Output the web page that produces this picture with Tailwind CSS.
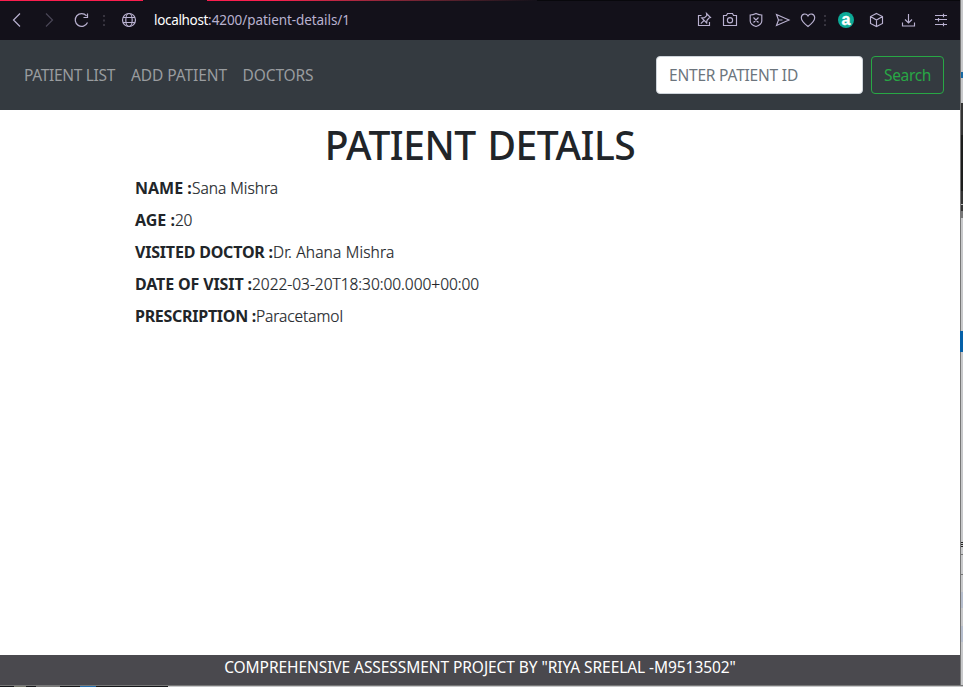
<!DOCTYPE html>
<html lang="en"><head><meta charset="utf-8"><title>Patient Details</title>
<script src="https://cdn.jsdelivr.net/npm/@tailwindcss/browser@4"></script></head>
<body class="flex h-[687px] w-[963px] flex-col overflow-hidden bg-[#c7c8ca] font-['Noto_Sans',sans-serif] text-[15.5px] leading-6 text-[#212529]">
<div class="flex h-[685px]">
  <div class="flex w-[960px] flex-col bg-white">
    <!-- Browser toolbar -->
    <div class="flex h-10 flex-col bg-[#13111a]">
      <div class="flex h-px shrink-0">
        <div class="w-[143px] bg-[#fa1e4e]"></div><div class="w-16 bg-[#13111a]"></div>
        <div class="w-[330px] bg-linear-to-r from-[#fa1e4e] from-20% to-[#13111a]"></div><div class="flex-1 bg-[#08080c]"></div>
      </div>
      <div class="flex h-[39px] items-center text-[13.5px]">
        <svg class="h-[39px] w-[154px] shrink-0" viewBox="0 1 154 39" fill="none" stroke="#b9b1d0" stroke-width="1.2">
          <path d="M20 13.5 13.5 20l6.500 6.500"/>
          <path stroke="#4a4656" d="m46 13.500 6.500 6.500-6.500 6.500"/>
          <path d="M87.500 22.500A6.400 6.400 0 1 1 86.500 15.800M87.500 13.500v4h-4"/>
          <path stroke="#37343f" stroke-width="2" stroke-dasharray="2 2.500" d="M104 15v11"/>
          <circle cx="129" cy="20" r="6.500"/><ellipse cx="129" cy="20" rx="3.200" ry="6.500"/><path d="M123 17.500h12M123 22.500h12"/>
        </svg>
        <div class="flex-1 whitespace-nowrap pb-0.5 text-[#b9b1d0]"><span class="tracking-[-0.33px] text-white">localhost</span><span class="tracking-[-0.07px]">:4200/patient-details/1</span></div>
        <svg class="h-[39px] w-[270px] shrink-0" viewBox="690 1 270 39" fill="none" stroke="#b9b1d0" stroke-width="1.15">
          <path d="M701.500 15.500h-3v10h11v-3.500M706.500 13.500l4 4-1.500.5-2 2.300-.3 2.700-5-5 2.800-.4 2.300-2zM704 20.500l-3.200 3.200"/>
          <path d="M723.500 15.500h3l1-2h5l1 2h3v10h-13z"/><circle cx="730" cy="20.200" r="2.600"/>
          <path d="M756 13.500c2 1 4 1.500 5.800 1.500v6c0 2.500-2.800 4.500-5.800 5.500-3-1-5.800-3-5.800-5.500v-6c1.800 0 3.800-.5 5.800-1.500zM753.500 17.500l5 5M758.500 17.500l-5 5"/>
          <path d="m776.500 14.500 12.500 5.500-12.500 5.500 2-5.500zM778.500 20h4"/>
          <path d="M808 26.500c-4-3-6.700-5.300-6.700-8.700 0-4.200 5-5 6.700-1.800 1.700-3.200 6.700-2.400 6.700 1.800 0 3.400-2.700 5.700-6.700 8.700z"/>
          <path stroke="#37343f" stroke-width="2" stroke-dasharray="2 2.500" d="M825 15v11"/>
          <circle cx="846" cy="20" r="8" fill="#0caa97" stroke="none"/>
          <text x="846" y="24.500" text-anchor="middle" fill="#fff" stroke="#fff" stroke-width="0.4" class="font-['Liberation_Sans',sans-serif] text-[16px] font-bold">a</text>
          <path d="m876.500 13.500 6 3v7l-6 3-6-3v-7zM870.500 16.500l6 3.500 6-3.500M876.500 20v6.500"/>
          <path d="M908.500 14v8.500M905 19.500l3.500 3.500 3.500-3.500M902.500 22.500v3.500h12v-3.500"/>
          <path d="M935 15.500h12M935 19.500h12M935 24.500h12M943.500 13.800v3.500M938.500 18v3.500M943.500 22.700v3.500"/>
        </svg>
      </div>
    </div>
    <!-- Site navigation -->
    <nav class="flex h-[70px] items-center whitespace-nowrap bg-[#343a40] pl-6 pr-4 text-[#999c9f]">
      <a class="w-[107px] tracking-[-0.32px]">PATIENT LIST</a><a class="w-[111.500px] tracking-[-0.08px]">ADD PATIENT</a><a class="tracking-[-0.11px]">DOCTORS</a>
      <div class="ml-auto flex h-[38px] w-[207px] items-center rounded border border-[#ced4da] bg-white px-3 tracking-[-0.2px] text-[#6c757d]">ENTER PATIENT ID</div>
      <div class="ml-2 flex h-[38px] w-[73px] items-center justify-center rounded border border-[#28a745] tracking-[-0.33px] text-[#28a745]">Search</div>
    </nav>
    <!-- Patient record -->
    <main class="flex-1 whitespace-nowrap pt-[11px]">
      <h1 class="text-center text-[39px] font-medium leading-[48px] tracking-[-0.45px] [word-spacing:2px]">PATIENT DETAILS</h1>
      <div class="flex flex-col gap-2 pl-[135px] pt-[7px]">
        <p class="flex"><b class="w-[57px] text-base">NAME :</b><span class="font-light [-webkit-text-stroke:0.2px]">Sana Mishra</span></p>
        <p class="flex"><b class="w-10 text-base">AGE :</b><span class="font-light tracking-[-0.3px] [-webkit-text-stroke:0.2px]">20</span></p>
        <p class="flex"><b class="w-[138px] text-base tracking-[-0.2px]">VISITED DOCTOR :</b><span class="font-light tracking-[0.17px] [-webkit-text-stroke:0.2px]">Dr. Ahana Mishra</span></p>
        <p class="flex"><b class="w-[117px] text-base tracking-[-0.13px]">DATE OF VISIT :</b><span class="font-light tracking-[-0.03px] [-webkit-text-stroke:0.2px]">2022-03-20T18:30:00.000+00:00</span></p>
        <p class="flex"><b class="w-[121px] text-base tracking-[-0.28px]">PRESCRIPTION :</b><span class="font-light tracking-[-0.06px] [-webkit-text-stroke:0.2px]">Paracetamol</span></p>
      </div>
    </main>
    <footer class="h-[30px] whitespace-nowrap bg-[#4a494e] text-center tracking-[-0.07px] text-white">COMPREHENSIVE ASSESSMENT PROJECT BY "RIYA SREELAL -M9513502"</footer>
  </div>
  <!-- Edge of the window behind -->
  <div class="flex w-[3px] flex-col border-l border-[#777] bg-[#c7c8ca]">
    <div class="h-[72px]"></div><div class="h-1.5 bg-[#176aa5]"></div><div class="h-[25px]"></div>
    <div class="h-8 bg-[#333]"></div><div class="h-14 bg-[#1c1d1c]"></div><div class="h-[13px] bg-[#333]"></div><div class="h-px bg-[#bbb]"></div><div class="h-1.5 bg-[#333]"></div><div class="h-[7px] bg-[#777]"></div>
    <div class="h-[113px]"></div><div class="-ml-px h-[21px] bg-[#0560a8]"></div>
    <div class="h-[190px]"></div><div class="h-px bg-[#222]"></div><div class="h-px"></div><div class="h-px bg-[#222]"></div><div class="h-px"></div><div class="h-px bg-[#222]"></div>
    <div class="h-[7px]"></div><div class="h-px bg-[#777]"></div><div class="h-[19px]"></div><div class="h-px bg-[#777]"></div>
    <div class="h-[17px]"></div><div class="h-4 bg-[#b5bdcc]"></div><div class="h-[18px]"></div><div class="h-4 bg-[#b5bdcc]"></div>
  </div>
</div>
<div class="flex h-0.5 border-t border-[#777]">
  <div class="flex w-[168px] bg-[#16171a] pl-3.5"><div class="w-3 bg-[#77796f]"></div><div class="ml-2.5 w-6 bg-[#777]"></div><div class="ml-5 w-4 bg-[#246caa]"></div></div>
</div>
</body></html>
